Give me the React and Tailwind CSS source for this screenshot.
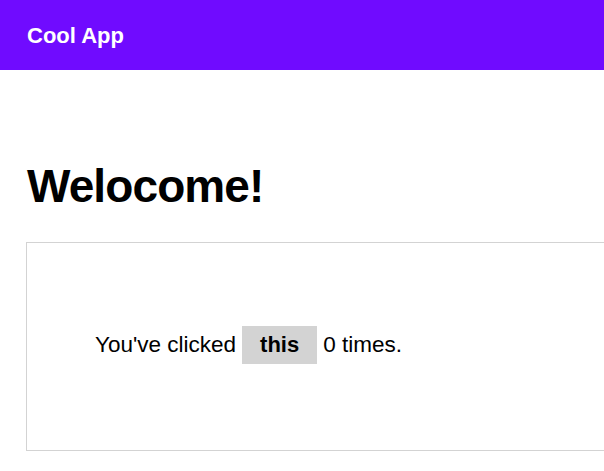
import React, { useState } from "react";

const App = () => {
  const [count, setCount] = useState(0);

  return (
    <div className="min-h-screen bg-white font-['Liberation_Sans',Arial,sans-serif] text-black overflow-hidden">
      <header className="h-[70px] bg-[#700bff] flex items-center px-[27px]">
        <h1 className="text-[22px] font-bold text-white">Cool App</h1>
      </header>

      <main className="px-[26px] pt-[88px]">
        <h2 className="text-[46px] font-bold leading-[56px] tracking-[-0.9px] ml-px">Welocome!</h2>

        <div className="mt-[28px] w-[640px] h-[209px] border border-[#d3d3d3] flex items-center pl-[68px] pb-[4px]">
          <p className="text-[22.5px] flex items-center">
            <span>You've clicked</span>
            <button
              onClick={() => setCount(count + 1)}
              className="mx-[6px] h-[38px] px-[18px] bg-[#d3d3d3] font-bold text-[22px]"
            >
              this
            </button>
            <span>{count} times.</span>
          </p>
        </div>
      </main>
    </div>
  );
};

export default App;
